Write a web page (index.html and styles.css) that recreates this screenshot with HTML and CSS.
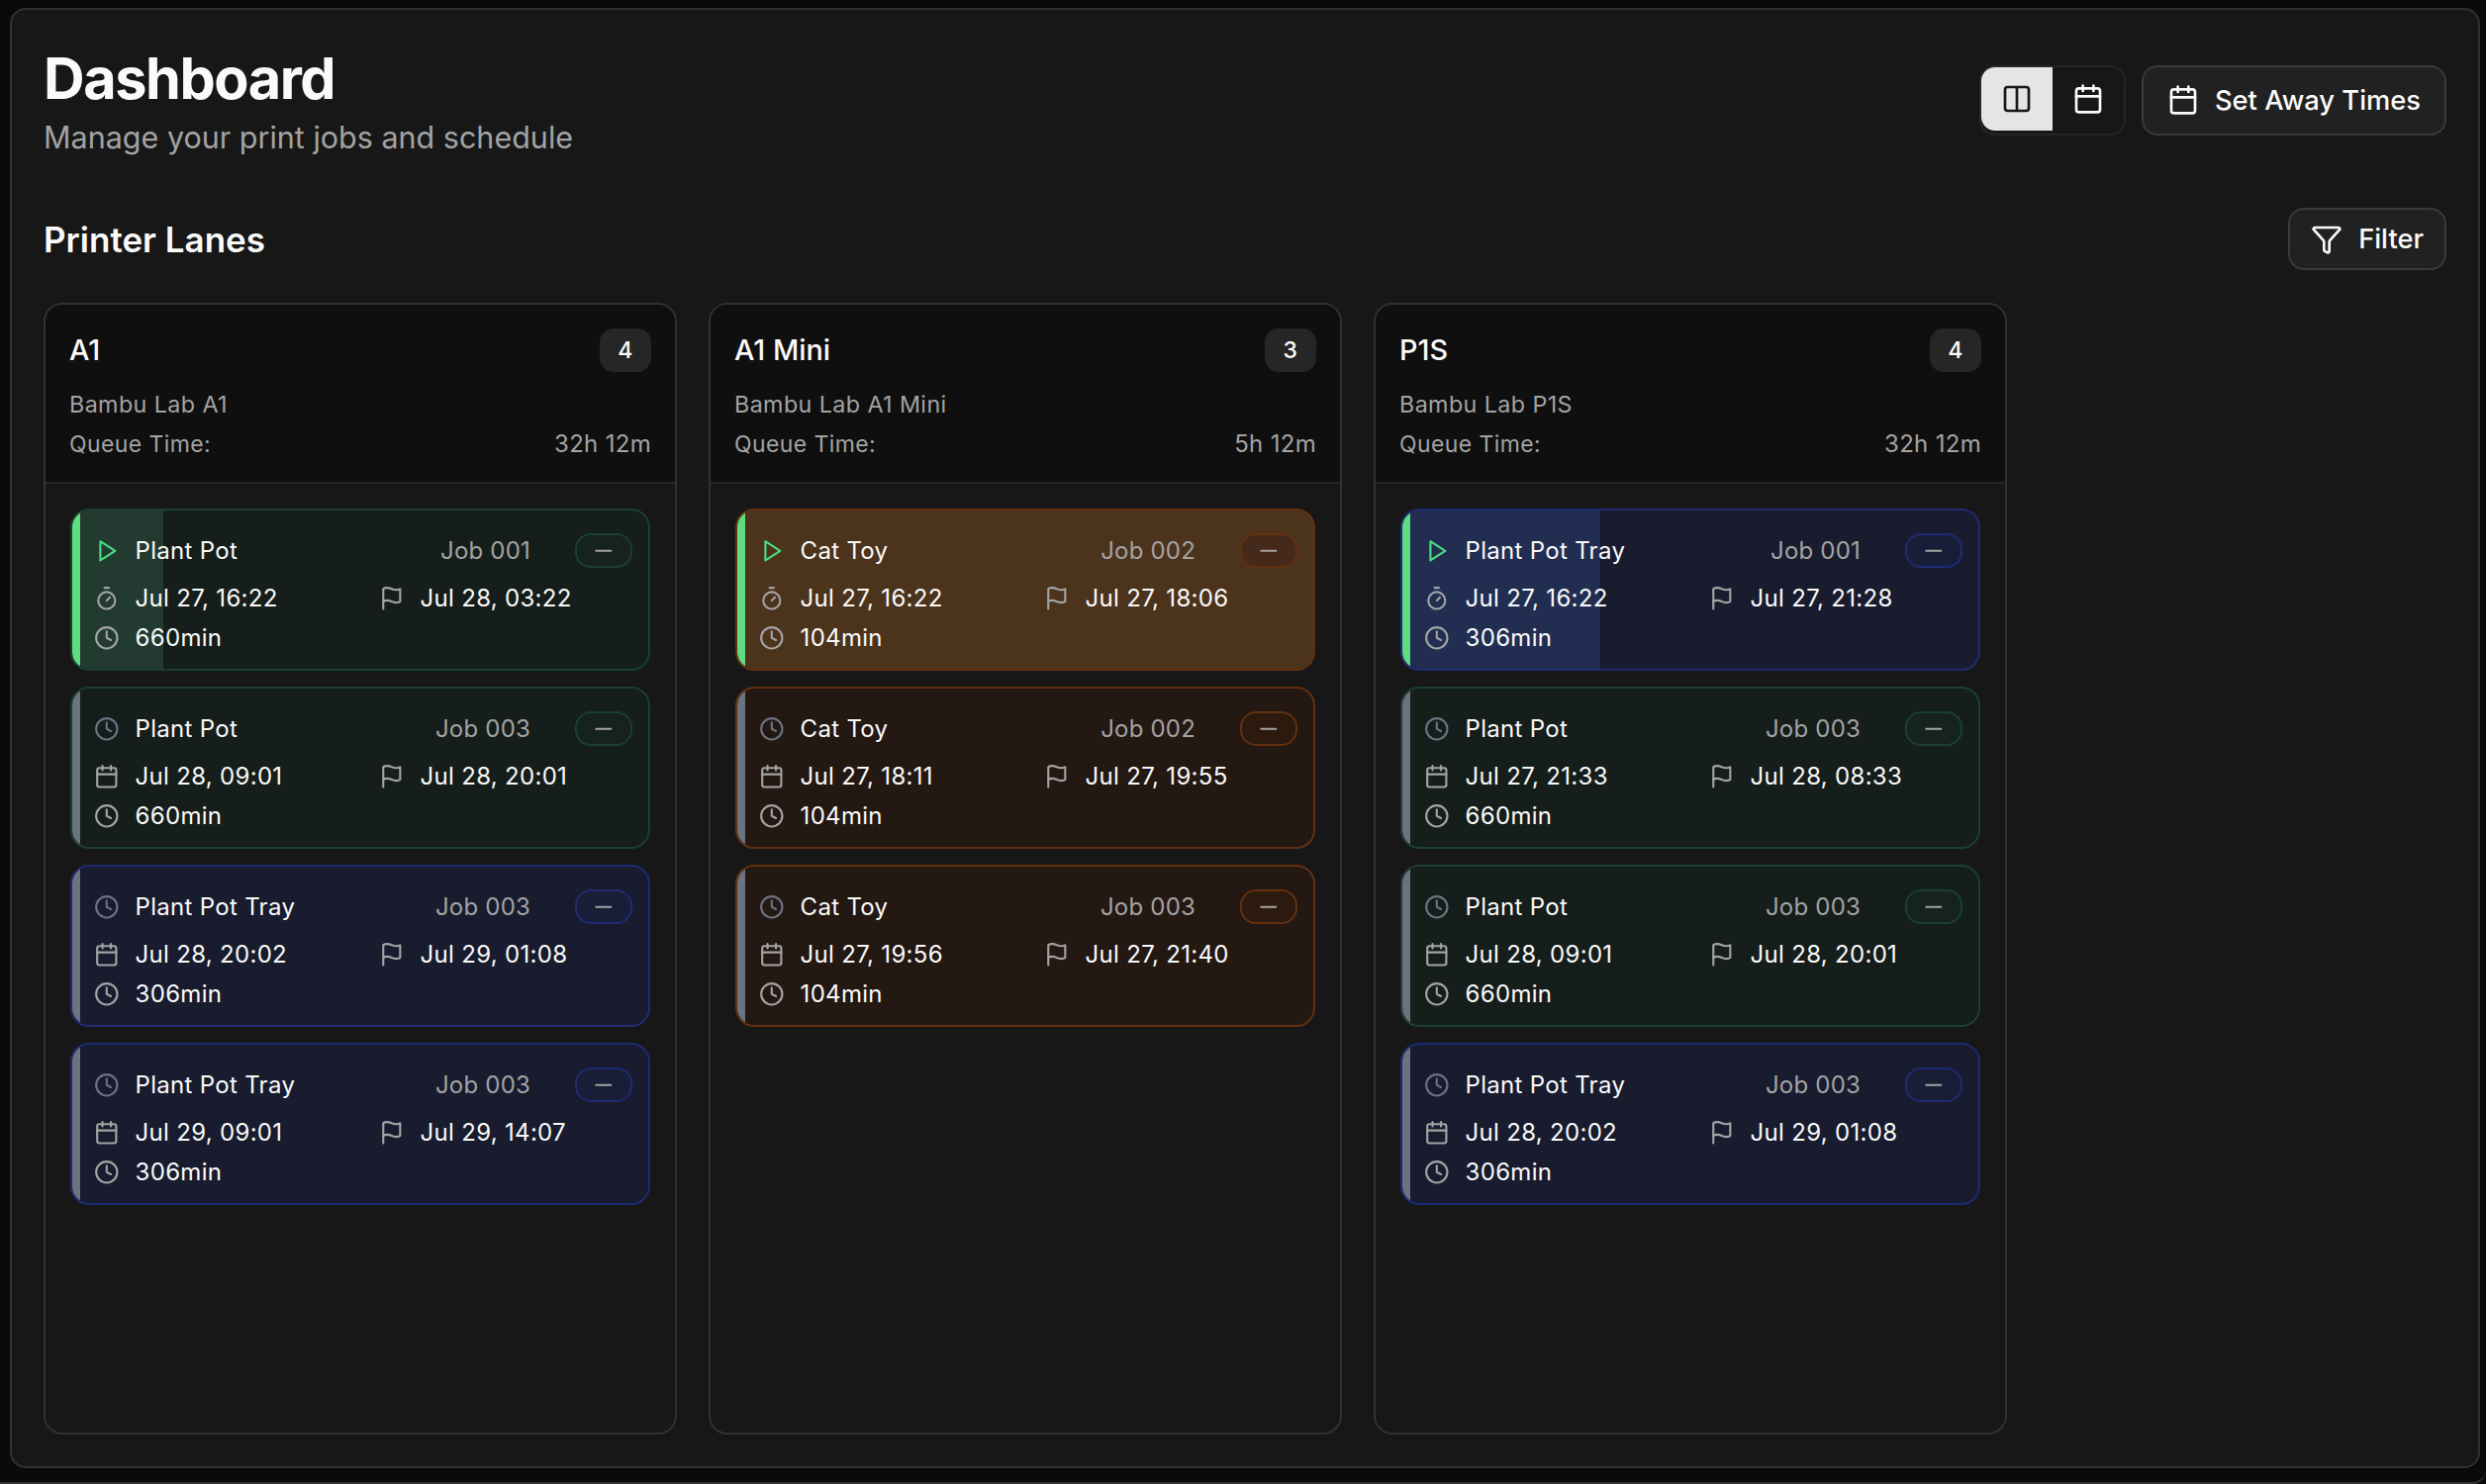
FILE: index.html
```html
<!DOCTYPE html>
<html lang="en">
<head>
  <meta charset="UTF-8">
  <meta name="viewport" content="width=device-width, initial-scale=1.0">
  <title>Dashboard</title>
  <link rel="stylesheet" href="styles.css">
</head>
<body>
  <!-- icon sprite, lucide style shapes -->
  <svg class="sprite" xmlns="http://www.w3.org/2000/svg">
    <symbol id="i-play" viewBox="0 0 24 24"><polygon points="6 3 20 12 6 21 6 3"/></symbol>
    <symbol id="i-timer" viewBox="0 0 24 24"><line x1="10" x2="14" y1="2" y2="2"/><line x1="12" x2="15" y1="14" y2="11"/><circle cx="12" cy="14" r="8"/></symbol>
    <symbol id="i-clock" viewBox="0 0 24 24"><circle cx="12" cy="12" r="10"/><polyline points="12 6 12 12 16 14"/></symbol>
    <symbol id="i-calendar" viewBox="0 0 24 24"><path d="M8 2v4"/><path d="M16 2v4"/><rect width="18" height="18" x="3" y="4" rx="2"/><path d="M3 10h18"/></symbol>
    <symbol id="i-flag" viewBox="0 0 24 24"><path d="M4 15s1-1 4-1 5 2 8 2 4-1 4-1V3s-1 1-4 1-5-2-8-2-4 1-4 1z"/><line x1="4" x2="4" y1="22" y2="15"/></symbol>
    <symbol id="i-minus" viewBox="0 0 24 24"><path d="M5 12h14"/></symbol>
    <symbol id="i-columns" viewBox="0 0 24 24"><rect width="18" height="18" x="3" y="3" rx="2"/><path d="M12 3v18"/></symbol>
    <symbol id="i-funnel" viewBox="0 0 24 24"><path d="M10 20a1 1 0 0 0 .553.895l2 1A1 1 0 0 0 14 21v-7a2 2 0 0 1 .517-1.341L21.74 4.67A1 1 0 0 0 21 3H3a1 1 0 0 0-.742 1.67l7.225 7.989A2 2 0 0 1 10 14z"/></symbol>
  </svg>

  <div class="frame">
    <main class="panel">
      <header class="page-header">
        <div>
          <h1>Dashboard</h1>
          <p class="subtitle">Manage your print jobs and schedule</p>
        </div>
        <div class="actions">
          <div class="view-toggle">
            <button class="toggle-btn active"><svg class="icon-lg"><use href="#i-columns"/></svg></button>
            <button class="toggle-btn"><svg class="icon-lg"><use href="#i-calendar"/></svg></button>
          </div>
          <button class="btn btn-away"><svg class="icon-lg"><use href="#i-calendar"/></svg>Set Away Times</button>
        </div>
      </header>

      <div class="section-header">
        <h2>Printer Lanes</h2>
        <button class="btn btn-filter"><svg class="icon-lg"><use href="#i-funnel"/></svg>Filter</button>
      </div>

      <div class="lanes">
        <!-- A1 -->
        <section class="lane">
          <div class="lane-header">
            <div class="lane-title"><h3>A1</h3><span class="count">4</span></div>
            <div class="lane-model">Bambu Lab A1</div>
            <div class="lane-queue"><span>Queue Time:</span><span>32h 12m</span></div>
          </div>
          <div class="lane-body">
            <article class="job job-green">
              <div class="job-progress" style="width: 15.8%"></div>
              <div class="job-bar running"></div>
              <div class="job-content">
                <div class="job-top"><svg class="icon icon-play"><use href="#i-play"/></svg><span class="job-name">Plant Pot</span><span class="job-id">Job 001</span><button class="pill"><svg class="icon"><use href="#i-minus"/></svg></button></div>
                <div class="job-dates">
                  <div class="job-line"><svg class="icon"><use href="#i-timer"/></svg>Jul 27, 16:22</div>
                  <div class="job-line"><svg class="icon"><use href="#i-flag"/></svg>Jul 28, 03:22</div>
                </div>
                <div class="job-line"><svg class="icon"><use href="#i-clock"/></svg>660min</div>
              </div>
            </article>
            <article class="job job-green">
              <div class="job-bar"></div>
              <div class="job-content">
                <div class="job-top"><svg class="icon icon-wait"><use href="#i-clock"/></svg><span class="job-name">Plant Pot</span><span class="job-id">Job 003</span><button class="pill"><svg class="icon"><use href="#i-minus"/></svg></button></div>
                <div class="job-dates">
                  <div class="job-line"><svg class="icon"><use href="#i-calendar"/></svg>Jul 28, 09:01</div>
                  <div class="job-line"><svg class="icon"><use href="#i-flag"/></svg>Jul 28, 20:01</div>
                </div>
                <div class="job-line"><svg class="icon"><use href="#i-clock"/></svg>660min</div>
              </div>
            </article>
            <article class="job job-blue">
              <div class="job-bar"></div>
              <div class="job-content">
                <div class="job-top"><svg class="icon icon-wait"><use href="#i-clock"/></svg><span class="job-name">Plant Pot Tray</span><span class="job-id">Job 003</span><button class="pill"><svg class="icon"><use href="#i-minus"/></svg></button></div>
                <div class="job-dates">
                  <div class="job-line"><svg class="icon"><use href="#i-calendar"/></svg>Jul 28, 20:02</div>
                  <div class="job-line"><svg class="icon"><use href="#i-flag"/></svg>Jul 29, 01:08</div>
                </div>
                <div class="job-line"><svg class="icon"><use href="#i-clock"/></svg>306min</div>
              </div>
            </article>
            <article class="job job-blue">
              <div class="job-bar"></div>
              <div class="job-content">
                <div class="job-top"><svg class="icon icon-wait"><use href="#i-clock"/></svg><span class="job-name">Plant Pot Tray</span><span class="job-id">Job 003</span><button class="pill"><svg class="icon"><use href="#i-minus"/></svg></button></div>
                <div class="job-dates">
                  <div class="job-line"><svg class="icon"><use href="#i-calendar"/></svg>Jul 29, 09:01</div>
                  <div class="job-line"><svg class="icon"><use href="#i-flag"/></svg>Jul 29, 14:07</div>
                </div>
                <div class="job-line"><svg class="icon"><use href="#i-clock"/></svg>306min</div>
              </div>
            </article>
          </div>
        </section>

        <!-- A1 Mini -->
        <section class="lane">
          <div class="lane-header">
            <div class="lane-title"><h3>A1 Mini</h3><span class="count">3</span></div>
            <div class="lane-model">Bambu Lab A1 Mini</div>
            <div class="lane-queue"><span>Queue Time:</span><span>5h 12m</span></div>
          </div>
          <div class="lane-body">
            <article class="job job-orange job-active">
              <div class="job-bar running"></div>
              <div class="job-content">
                <div class="job-top"><svg class="icon icon-play"><use href="#i-play"/></svg><span class="job-name">Cat Toy</span><span class="job-id">Job 002</span><button class="pill"><svg class="icon"><use href="#i-minus"/></svg></button></div>
                <div class="job-dates">
                  <div class="job-line"><svg class="icon"><use href="#i-timer"/></svg>Jul 27, 16:22</div>
                  <div class="job-line"><svg class="icon"><use href="#i-flag"/></svg>Jul 27, 18:06</div>
                </div>
                <div class="job-line"><svg class="icon"><use href="#i-clock"/></svg>104min</div>
              </div>
            </article>
            <article class="job job-orange">
              <div class="job-bar"></div>
              <div class="job-content">
                <div class="job-top"><svg class="icon icon-wait"><use href="#i-clock"/></svg><span class="job-name">Cat Toy</span><span class="job-id">Job 002</span><button class="pill"><svg class="icon"><use href="#i-minus"/></svg></button></div>
                <div class="job-dates">
                  <div class="job-line"><svg class="icon"><use href="#i-calendar"/></svg>Jul 27, 18:11</div>
                  <div class="job-line"><svg class="icon"><use href="#i-flag"/></svg>Jul 27, 19:55</div>
                </div>
                <div class="job-line"><svg class="icon"><use href="#i-clock"/></svg>104min</div>
              </div>
            </article>
            <article class="job job-orange">
              <div class="job-bar"></div>
              <div class="job-content">
                <div class="job-top"><svg class="icon icon-wait"><use href="#i-clock"/></svg><span class="job-name">Cat Toy</span><span class="job-id">Job 003</span><button class="pill"><svg class="icon"><use href="#i-minus"/></svg></button></div>
                <div class="job-dates">
                  <div class="job-line"><svg class="icon"><use href="#i-calendar"/></svg>Jul 27, 19:56</div>
                  <div class="job-line"><svg class="icon"><use href="#i-flag"/></svg>Jul 27, 21:40</div>
                </div>
                <div class="job-line"><svg class="icon"><use href="#i-clock"/></svg>104min</div>
              </div>
            </article>
          </div>
        </section>

        <!-- P1S -->
        <section class="lane">
          <div class="lane-header">
            <div class="lane-title"><h3>P1S</h3><span class="count">4</span></div>
            <div class="lane-model">Bambu Lab P1S</div>
            <div class="lane-queue"><span>Queue Time:</span><span>32h 12m</span></div>
          </div>
          <div class="lane-body">
            <article class="job job-blue">
              <div class="job-progress" style="width: 34.4%"></div>
              <div class="job-bar running"></div>
              <div class="job-content">
                <div class="job-top"><svg class="icon icon-play"><use href="#i-play"/></svg><span class="job-name">Plant Pot Tray</span><span class="job-id">Job 001</span><button class="pill"><svg class="icon"><use href="#i-minus"/></svg></button></div>
                <div class="job-dates">
                  <div class="job-line"><svg class="icon"><use href="#i-timer"/></svg>Jul 27, 16:22</div>
                  <div class="job-line"><svg class="icon"><use href="#i-flag"/></svg>Jul 27, 21:28</div>
                </div>
                <div class="job-line"><svg class="icon"><use href="#i-clock"/></svg>306min</div>
              </div>
            </article>
            <article class="job job-green">
              <div class="job-bar"></div>
              <div class="job-content">
                <div class="job-top"><svg class="icon icon-wait"><use href="#i-clock"/></svg><span class="job-name">Plant Pot</span><span class="job-id">Job 003</span><button class="pill"><svg class="icon"><use href="#i-minus"/></svg></button></div>
                <div class="job-dates">
                  <div class="job-line"><svg class="icon"><use href="#i-calendar"/></svg>Jul 27, 21:33</div>
                  <div class="job-line"><svg class="icon"><use href="#i-flag"/></svg>Jul 28, 08:33</div>
                </div>
                <div class="job-line"><svg class="icon"><use href="#i-clock"/></svg>660min</div>
              </div>
            </article>
            <article class="job job-green">
              <div class="job-bar"></div>
              <div class="job-content">
                <div class="job-top"><svg class="icon icon-wait"><use href="#i-clock"/></svg><span class="job-name">Plant Pot</span><span class="job-id">Job 003</span><button class="pill"><svg class="icon"><use href="#i-minus"/></svg></button></div>
                <div class="job-dates">
                  <div class="job-line"><svg class="icon"><use href="#i-calendar"/></svg>Jul 28, 09:01</div>
                  <div class="job-line"><svg class="icon"><use href="#i-flag"/></svg>Jul 28, 20:01</div>
                </div>
                <div class="job-line"><svg class="icon"><use href="#i-clock"/></svg>660min</div>
              </div>
            </article>
            <article class="job job-blue">
              <div class="job-bar"></div>
              <div class="job-content">
                <div class="job-top"><svg class="icon icon-wait"><use href="#i-clock"/></svg><span class="job-name">Plant Pot Tray</span><span class="job-id">Job 003</span><button class="pill"><svg class="icon"><use href="#i-minus"/></svg></button></div>
                <div class="job-dates">
                  <div class="job-line"><svg class="icon"><use href="#i-calendar"/></svg>Jul 28, 20:02</div>
                  <div class="job-line"><svg class="icon"><use href="#i-flag"/></svg>Jul 29, 01:08</div>
                </div>
                <div class="job-line"><svg class="icon"><use href="#i-clock"/></svg>306min</div>
              </div>
            </article>
          </div>
        </section>
      </div>
    </main>
  </div>
</body>
</html>
```

FILE: styles.css
```css
* {
  box-sizing: border-box;
}
body {
  margin: 0;
  background-color: #0a0a0a;
  color: #fafafa;
  font-family: Inter, "Liberation Sans", sans-serif;
}
h1, h2, h3, p {
  margin: 0;
}
button {
  font-family: inherit;
  cursor: pointer;
}
svg {
  fill: none;
  stroke: currentColor;
  stroke-width: 2;
  stroke-linecap: round;
  stroke-linejoin: round;
  flex-shrink: 0;
}
.sprite {
  display: none;
}
.icon {
  width: 25.6px;
  height: 25.6px;
  color: #a3a3a3;
}
.icon-lg {
  width: 32px;
  height: 32px;
}
.icon-play {
  color: #4ade80;
}
.icon-wait {
  color: #6b7280;
}

.frame {
  height: 1500px;
  padding: 8px 6px 14px 10px;
  border-bottom: 2px solid #333;
  border-bottom-right-radius: 14px;
}
.panel {
  display: flex;
  flex-direction: column;
  height: 100%;
  padding: 33px 32px 32px;
  background-color: #171717;
  border: 2px solid #313131;
  border-radius: 16px;
}

.page-header {
  display: flex;
  justify-content: space-between;
  align-items: center;
}
h1 {
  font-size: 57.6px;
  font-weight: 700;
  line-height: 72px;
  letter-spacing: -1.44px;
}
.subtitle {
  margin-top: 4px;
  font-size: 30.5px;
  line-height: 40px;
  color: #a3a3a3;
}
.actions {
  display: flex;
  gap: 16px;
}
.view-toggle {
  display: flex;
  width: 148px;
  height: 71px;
  border: 2px solid #262626;
  border-radius: 16px;
}
.toggle-btn {
  display: flex;
  align-items: center;
  justify-content: center;
  width: 72px;
  height: 64px;
  padding: 0;
  border: none;
  background: none;
  color: #fafafa;
}
.toggle-btn.active {
  background-color: #e5e5e5;
  color: #171717;
  border-radius: 14px 0 0 14px;
}
.btn {
  display: flex;
  align-items: center;
  gap: 16px;
  background-color: #212121;
  border: 2px solid #3a3a3a;
  border-radius: 16px;
  color: #fafafa;
  font-size: 27.3px;
  font-weight: 500;
}
.btn-away {
  height: 71px;
  padding: 0 24px;
}
.btn-filter {
  height: 63px;
  padding: 0 21px;
}

.section-header {
  display: flex;
  justify-content: space-between;
  align-items: center;
  margin-top: 51px;
}
h2 {
  font-size: 35px;
  font-weight: 600;
}

.lanes {
  display: grid;
  grid-template-columns: repeat(3, 640px);
  gap: 32px;
  flex: 1;
  margin-top: 33px;
}
.lane {
  display: flex;
  flex-direction: column;
  border: 2px solid #313131;
  border-radius: 19px;
  overflow: hidden;
}
.lane-header {
  padding: 24px 24px 20px;
  background-color: #0f0f0f;
  border-bottom: 2px solid #262626;
  font-size: 23px;
  line-height: 36px;
  letter-spacing: 0.4px;
  color: #a3a3a3;
}
.lane-title {
  display: flex;
  justify-content: space-between;
  align-items: center;
}
h3 {
  font-size: 28.8px;
  font-weight: 500;
  letter-spacing: 0;
  color: #fafafa;
}
.count {
  display: flex;
  align-items: center;
  justify-content: center;
  width: 52px;
  height: 44px;
  background-color: #262626;
  border-radius: 14px;
  font-weight: 500;
  color: #fafafa;
}
.lane-model {
  margin-top: 15px;
  font-size: 23.3px;
}
.lane-queue {
  display: flex;
  justify-content: space-between;
  margin-top: 4px;
}
.lane-queue span:last-child {
  font-size: 24px;
  letter-spacing: 0.3px;
}
.lane-body {
  display: flex;
  flex-direction: column;
  gap: 16px;
  padding: 25px;
}

.job {
  position: relative;
  border: 2px solid var(--line);
  border-radius: 19px;
  overflow: hidden;
}
.job-green {
  background-color: #151e1b;
  --line: #1b3f32;
  --progress: #223a30;
  --pill: #16221d;
}
.job-blue {
  background-color: #181c2e;
  --line: #1e2b72;
  --progress: #212e52;
  --pill: #181e38;
}
.job-orange {
  background-color: #241813;
  --line: #62300f;
  --pill: #2c1a0f;
}
.job-active {
  background-color: #4c331c;
  --pill: #45291a;
}
.job-progress {
  position: absolute;
  top: 0;
  bottom: 0;
  left: 0;
  background-color: var(--progress);
}
.job-bar {
  position: absolute;
  top: 0;
  bottom: 0;
  left: 0;
  width: 8px;
  background-color: #6b7280;
}
.job-bar.running {
  background-color: #5fdc7f;
}
.job-content {
  position: relative;
  display: flex;
  flex-direction: column;
  gap: 8px;
  padding: 23px 16px 15px 22px;
  font-size: 24px;
  line-height: 32px;
  letter-spacing: 0.3px;
}
.job-top {
  display: flex;
  align-items: center;
  gap: 16px;
  height: 35px;
  margin-bottom: 7px;
}
.job-name {
  flex: 1;
}
.job-id {
  margin-right: 29px;
  letter-spacing: 0.2px;
  color: #a3a3a3;
}
.pill {
  display: flex;
  align-items: center;
  justify-content: center;
  width: 58px;
  height: 35px;
  padding: 0;
  background-color: var(--pill);
  border: 2px solid var(--line);
  border-radius: 16px;
}
.job-dates {
  display: grid;
  grid-template-columns: 1fr 1fr;
  gap: 32px;
}
.job-line {
  display: flex;
  align-items: center;
  gap: 16px;
}
```
